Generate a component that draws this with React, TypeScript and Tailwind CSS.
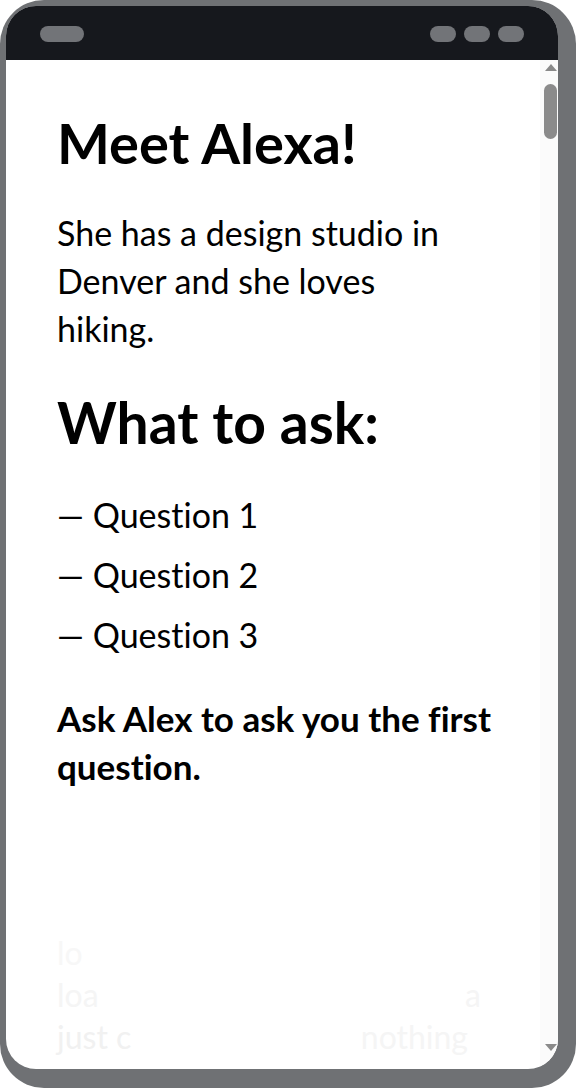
import React from 'react';

const questions = ['Question 1', 'Question 2', 'Question 3'];

export default function App() {
  return (
    <div
      className="w-[576px] h-[1088px] bg-white [font-variant-ligatures:none]"
      style={{ fontFamily: 'Lato, "Noto Sans", sans-serif' }}
    >
      {/* Phone frame */}
      <div className="w-full h-full rounded-[44px] bg-[#6f7174] pl-[6px] pt-[6px] pr-[18px] pb-[19px]">
        <div className="w-full h-full rounded-[30px] bg-white overflow-hidden flex flex-col">
          {/* Top bar */}
          <div className="h-[54px] shrink-0 bg-[#16181d] flex items-start justify-between px-[34px] pt-[20px]">
            <div className="w-[44px] h-[16px] rounded-full bg-[#727478]" />
            <div className="flex gap-[8px]">
              <div className="w-[26px] h-[16px] rounded-full bg-[#727478]" />
              <div className="w-[26px] h-[16px] rounded-full bg-[#727478]" />
              <div className="w-[26px] h-[16px] rounded-full bg-[#727478]" />
            </div>
          </div>

          {/* Screen */}
          <div className="flex-1 flex min-h-0">
            <div className="flex-1 pl-[51px] pr-[20px] pt-[51px] text-black overflow-hidden">
              <h1 className="text-[56px] leading-[64px] font-bold">Meet Alexa!</h1>
              <p className="mt-[34px] text-[34px] leading-[48px] w-[400px]">
                She has a design studio in Denver and she loves hiking.
              </p>
              <h2 className="mt-[37px] text-[57px] leading-[64px] font-bold">What to ask:</h2>
              <ul className="mt-[37px] flex flex-col gap-[12px]">
                {questions.map((q) => (
                  <li key={q} className="text-[34px] leading-[48px]">— {q}</li>
                ))}
              </ul>
              <p className="mt-[35px] text-[35px] leading-[48px] font-bold">
                Ask Alex to ask you the first question.
              </p>
              <div className="mt-[142px] text-[32px] leading-[42px] whitespace-nowrap">
                <div className="text-[#f7f7f7]">
                  lo<span className="text-transparent">ok at it</span>
                </div>
                <div className="w-[424px] flex justify-between text-[#f5f5f5]">
                  <span>loa</span>
                  <span>a</span>
                </div>
                <div className="w-[411px] flex justify-between text-[#f1f1f1]">
                  <span>just c</span>
                  <span className="text-[#f5f5f5]">nothing</span>
                </div>
              </div>
            </div>

            {/* Scrollbar */}
            <div className="w-[18px] shrink-0 bg-[#fbfbfb] flex flex-col items-center pt-[4px] pb-[18px]">
              <svg width="12" height="7" viewBox="0 0 12 7" className="ml-[3px]">
                <path d="M0 7 L6 0 L12 7 Z" fill="#8a8a8a" />
              </svg>
              <div className="mt-[13px] ml-[3px] w-[13px] h-[55px] rounded-full bg-[#8b8b8b]" />
              <div className="flex-1" />
              <svg width="12" height="7" viewBox="0 0 12 7" className="ml-[3px]">
                <path d="M0 0 L12 0 L6 7 Z" fill="#8a8a8a" />
              </svg>
            </div>
          </div>
        </div>
      </div>
    </div>
  );
}
